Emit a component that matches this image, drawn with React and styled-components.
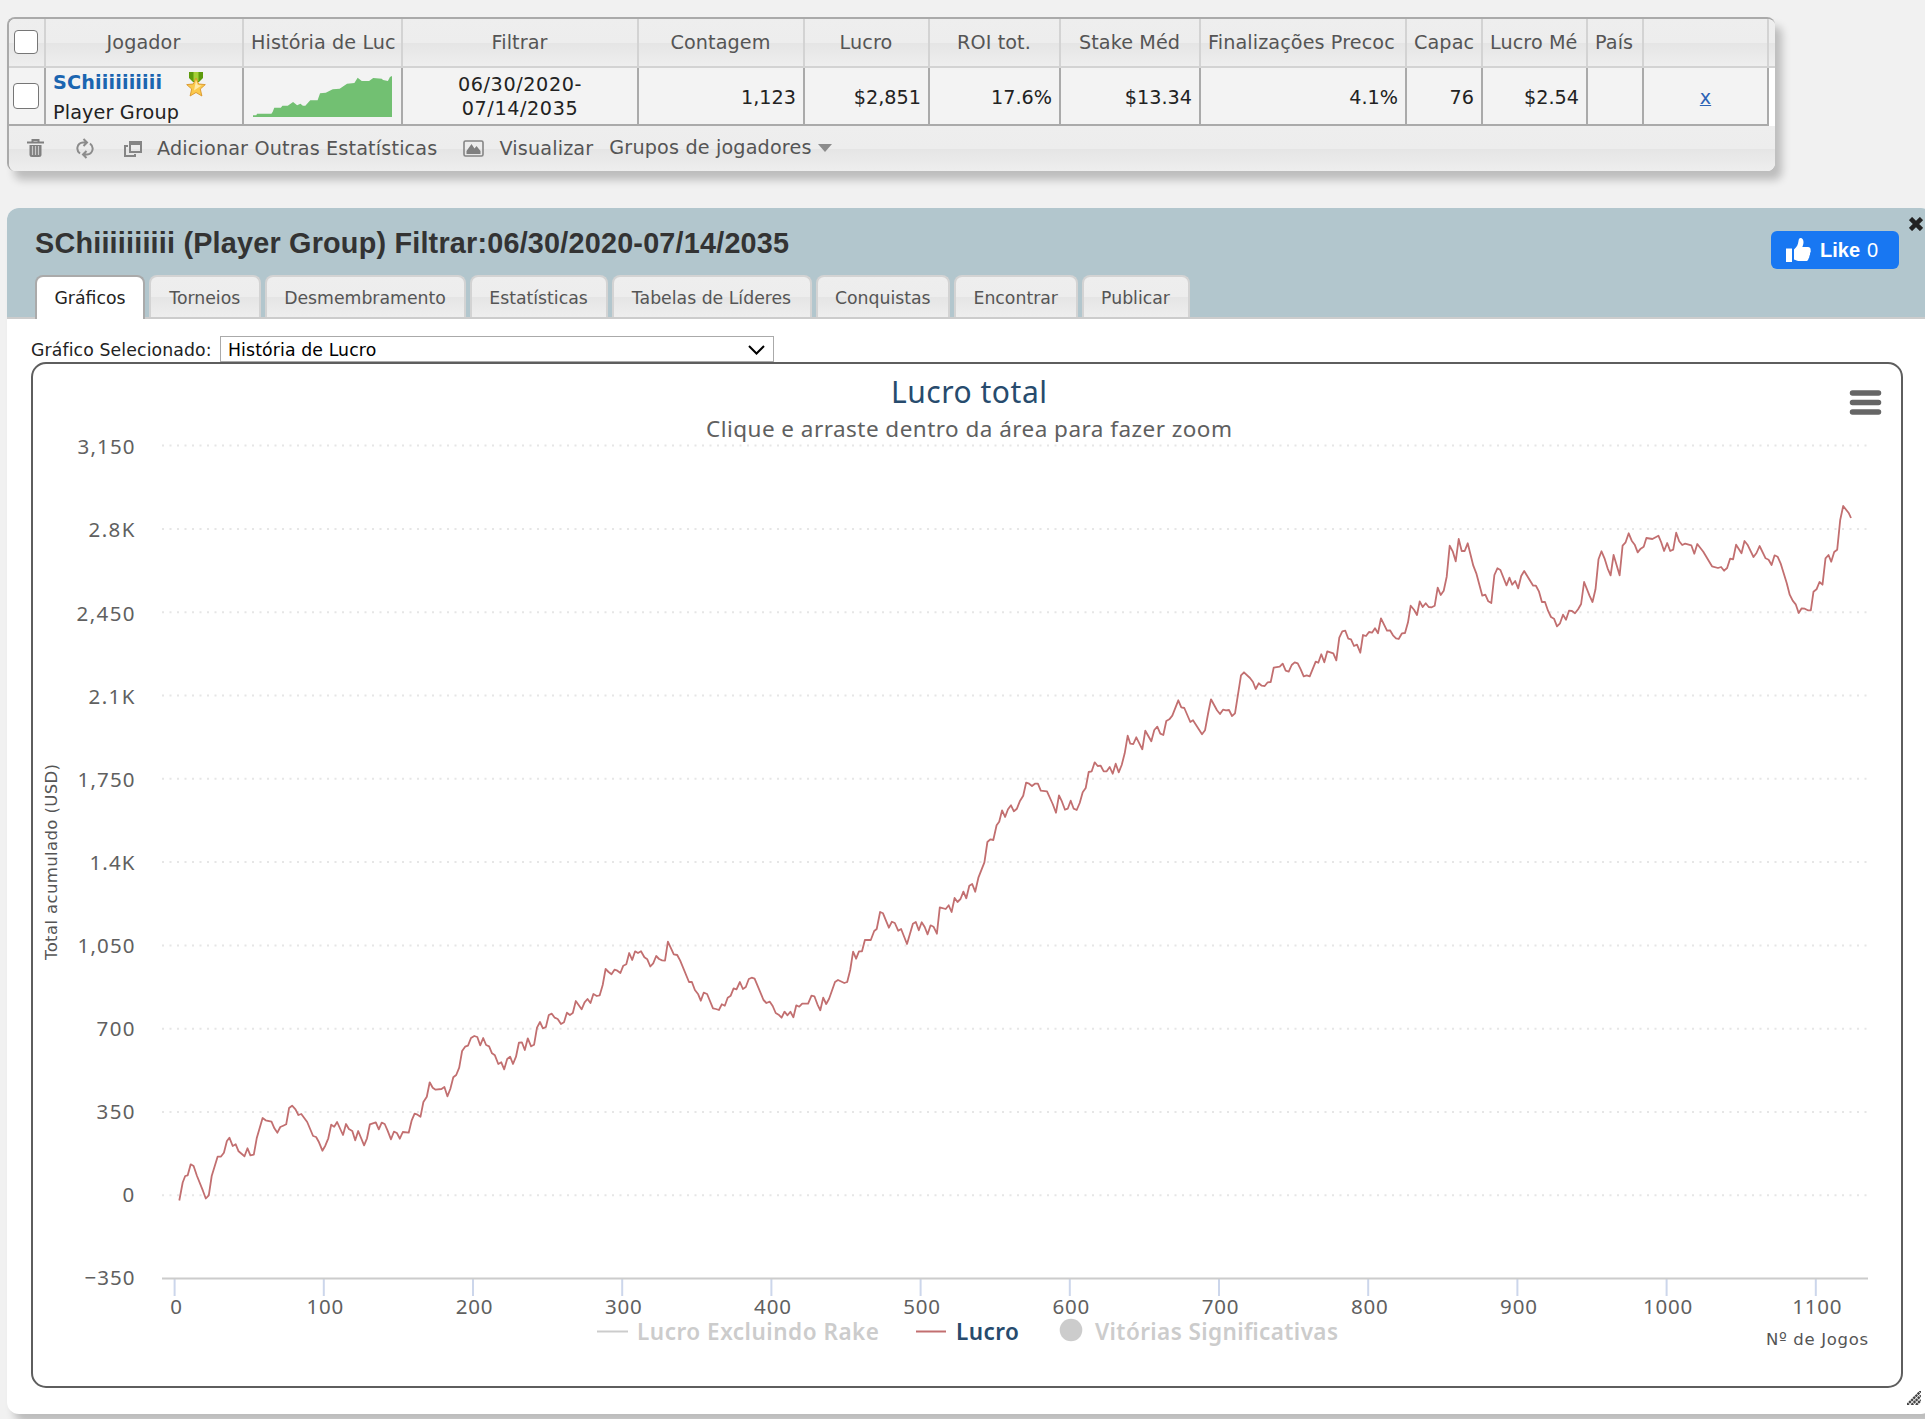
import { useState } from 'react';
import styled, { createGlobalStyle, css } from 'styled-components'

const columns = [
  { label: 'História de Luc', left: true },
  { label: 'Filtrar' },
  { label: 'Contagem' },
  { label: 'Lucro' },
  { label: 'ROI tot.' },
  { label: 'Stake Méd' },
  { label: 'Finalizações Precoc', left: true },
  { label: 'Capac', left: true },
  { label: 'Lucro Mé', left: true },
  { label: 'País', left: true },
  { label: '' },
]

const tabs = [
  { label: 'Gráficos', width: 110 },
  { label: 'Torneios', width: 111.5 },
  { label: 'Desmembramento', width: 201 },
  { label: 'Estatísticas', width: 138 },
  { label: 'Tabelas de Líderes', width: 200 },
  { label: 'Conquistas', width: 134.5 },
  { label: 'Encontrar', width: 123.5 },
  { label: 'Publicar', width: 108 },
]

const yTicks = [
  ['3,150', 57], ['2.8K', 46], ['2,450', 58], ['2.1K', 46], ['1,750', 57], ['1.4K', 45],
  ['1,050', 57], ['700', 38], ['350', 38], ['0', 12], ['−350', 50],
]

const xTicks = [0, 100, 200, 300, 400, 500, 600, 700, 800, 900, 1000, 1100]

const profit = `
179.3,1200.5 182.7,1182.5 185.2,1176 187.7,1175.3 190.7,1164.3 193.6,1166 197,1176 202.9,1190.7 205.8,1198.5 208.8,1195.3
211.7,1176 217.6,1156.7 221,1156.5 223.9,1152.7 226.9,1141 229.4,1137.7 232.7,1146 235.7,1144.3 238.6,1151.3 244.5,1156.3
247.5,1148.3 250.4,1155.3 253.8,1154.7 256.7,1138.3 262.6,1118 265.6,1120.3 271.5,1121.7 274.4,1128.3 277.4,1132.7 280.3,1127
283.2,1125.7 286.2,1124.3 289.1,1108 292.1,1105.7 295.5,1109.3 298.4,1115 301.3,1114 307.2,1122 313.1,1136 316.1,1137
319,1142.3 322.4,1150.7 325.3,1145.7 328.3,1138.3 331.2,1124.7 334.2,1126.7 337.1,1122 343,1135 346,1124 348.9,1129
352.3,1131 355.2,1140.3 358.2,1131 364.1,1145.3 367,1138.3 369.9,1124.3 375.8,1122.3 378.8,1129.3 381.7,1122.7 384.7,1124
387.6,1130.7 391,1139.3 393.9,1131.7 396.9,1133 399.8,1138.7 402.8,1132 408.7,1132.7 411.6,1120.7 414.6,1113.7 417.5,1114.7
420.5,1116.7 423.4,1102 426.8,1096.7 429.7,1082.3 432.7,1087.7 435.6,1089.7 441.5,1089 444.4,1087 447.4,1096.3 450.3,1089
453.3,1077.3 456.2,1075 459.2,1067.7 462.1,1051 465.1,1046.7 468,1045.7 471,1038 474.3,1036 477.3,1037 480.2,1045.3
483.2,1038 486.1,1045 489.1,1046.3 492,1053.3 494.9,1055.3 498.3,1064 501.3,1062.3 504.2,1069.3 507.2,1059 510.1,1056.7
513,1064 516,1056.7 518.9,1042.7 521.9,1042.3 524.8,1050 527.8,1038.3 531.1,1046.3 534.1,1044.7 537,1027.7 540,1022
542.9,1028.3 545.9,1027 548.8,1015 551.8,1013.7 554.7,1017.7 557.7,1019 561,1024 564,1022.3 566.9,1012.7 569.9,1015
572.8,1013 575.8,1001 581.6,1009.3 584.6,1002.3 587.5,999 590.5,1003 593.4,994 596.8,996 599.7,995.3 602.7,985
605.6,969 608.6,972 611.5,974.3 614.5,969.7 617.4,970.7 620.4,973 623.3,965.7 626.3,964.3 629.2,953 632.2,960
635.1,951.3 638,953 641,951.3 644.4,957.3 647.3,959.3 650.3,966.5 653.2,963.3 656.2,956 659.1,959 662.1,960.3
665,960.7 667.9,941.7 673.8,954.3 677.2,955 680.2,960.7 689,982 691.9,982 694.9,990 698.2,994.3 700.8,1000.7
703.7,992.7 707.1,994 713,1008.3 715.9,1009 718.9,1010 721.8,1004.3 724.8,1005.7 727.7,997.7 730.7,995.7 733.6,988.3
736.5,989.3 739.9,982 742.9,989 745.8,987 748.8,979 751.7,977.7 754.6,978.7 763.5,1000 766.4,1003 769.8,1001.7
772.7,1006 775.7,1013 778.6,1014.7 781.6,1017.7 784.5,1011.7 787.5,1015.3 790.4,1011.7 793.4,1017.3 796.3,1005.3 799.3,1006.7
802.2,1003.7 808.1,1003.7 811.5,995.7 814.4,996.3 817.4,1004.3 820.3,1010.3 823.2,997.7 826.2,1004 829.1,998.7 835,982
838,980 844.3,983 847.2,982 850.2,970 853.1,951.7 856.1,958.7 859,951.3 862,951.3 864.9,940 870.8,940
874.2,931 876.7,929 880.1,912 883,913.3 888.9,927.7 891.9,921.7 894.8,923 898.2,930.7 901.1,929 907,944
912.9,923.7 915.8,922 918.8,930.3 921.7,922.3 924.7,927 927.6,934.3 930.6,925.3 933.5,926.7 936.9,933.7 939.8,907.3
945.7,909 948.7,905.3 951.6,912 954.6,898 957.5,902 960.5,899 963.4,891.7 966.3,898.3 969.3,885.7 972.2,884
975.2,891.7 978.5,877.3 984.4,862.3 987.4,842 990.3,839.3 993.3,840 996.6,825.3 999.2,821.7 1002.1,810.3 1005.1,817
1008,809.3 1011,805.3 1013.9,811.3 1016.9,808.7 1019.8,801.3 1023.2,795.7 1026.1,782.7 1029.1,783.7 1032,786 1034.9,783.7
1037.9,783.7 1040.8,790.7 1047,791.3 1052.7,804 1056,812.7 1059,795.3 1062,801.7 1065,809.7 1067.7,808.7 1070.7,800.7
1073.7,808.7 1076.7,810 1079.7,803 1082.7,792.3 1085.7,788 1088.7,772 1091.7,771.3 1094.7,762.3 1097.7,766 1100.7,765.7
1103.7,771.3 1106.7,771.3 1109.7,767 1112.7,773.7 1115.7,763.7 1118.7,772.3 1121.7,765 1124.7,753.3 1127.7,735.7 1130.3,743.7
1133.3,744 1136.3,737.3 1142.3,749.3 1145.3,730.7 1151.3,741.3 1154.3,730 1157.3,726.7 1160.3,733.7 1163.3,735 1166.3,721
1169.3,719.3 1172.3,715.7 1178.3,700.3 1181.3,707.3 1184.3,708 1190.3,722 1193,720.3 1202,734.3 1205,730.3 1208,714
1211,699.3 1217,710.3 1220,714 1223,709.7 1226,710.3 1229,710 1232,716 1235,713.3 1241,675.3 1244,672.3
1250,678 1253,682 1255.7,689 1258.7,683.3 1261.7,685.7 1264.7,686 1267.7,682.3 1270.7,682 1273.7,667.7 1279.7,666.7
1282.7,663.7 1285.7,670.7 1288.7,671.7 1291.7,665 1294.7,662.3 1297.7,663.3 1300.7,669.3 1303.7,676.3 1306.7,675.3 1309.7,676.3
1315.7,661.7 1318.3,662.7 1321.3,654.3 1324.3,662.3 1327.3,651.3 1333.3,653.3 1336.3,660.3 1339.3,637.7 1342.3,631.3 1345.3,630.7
1348.3,638.7 1351,639.3 1354,646 1357,644.7 1360.3,652.7 1363,635 1366,636 1369,632 1372,632.7 1375,628.3
1378,633.3 1381,618.3 1387,630.7 1390,630.3 1393,635.3 1396,638.3 1398.7,639 1402,633.3 1405,633 1408,622.3
1410.7,605.7 1414,609.7 1417,615 1419.7,601.3 1422.7,607 1425.7,603.3 1428.7,607 1431.7,607.3 1434.7,605.7 1437.7,587.7
1440.7,595 1443.7,590.7 1446.7,576.7 1449.7,545.7 1452.7,551.3 1455.7,561.3 1458.7,539 1461.7,551 1464.7,551 1467.7,543.3
1473.3,565.7 1476.3,573.3 1482.3,595.7 1485.3,594.7 1488.3,601.3 1491.3,603 1494.4,575 1497.4,568.3 1500.4,570 1506.5,585.3
1509.5,577.7 1512.2,584.7 1515.2,581 1518.2,588.3 1521.2,576 1524.2,571 1533.2,585.7 1535.9,585.7 1538.9,591.3 1541.9,602
1545,602 1548,610.7 1551,617 1554,618.7 1557,626.3 1560,623.3 1563,614.7 1566,619.7 1569,610.7 1572,611
1575,613.3 1578.1,609.3 1581.1,604 1584.1,582 1589.5,595.7 1592.5,602 1595.5,589.3 1598.5,559.3 1601.5,551.3 1604.5,558.3
1607.6,568.3 1610.6,575.3 1613.6,555 1619.6,575.3 1622.6,545.7 1625.6,542.3 1628.7,533.3 1631.7,540.7 1634.7,544.7 1637.7,552.3
1640.7,548.7 1643.7,546.7 1646.4,538 1652.4,539 1658.4,535.7 1661.1,542 1664.1,551 1667.2,543 1670.2,551 1673.2,549.7
1676.2,532.7 1679.2,541.3 1682.2,545 1685.2,543.7 1691.3,545.3 1694.3,553.7 1697.3,544 1703.3,551.7 1712,566.3 1718,568
1721.1,567 1724.1,570.7 1727.1,568 1730.1,558.7 1733.1,559.3 1736.1,544.7 1741.5,553.3 1744.5,541 1747.5,544.7 1753.5,557
1756.5,553 1759.6,546 1765.6,558.3 1768.6,559.7 1771.6,565 1774.6,555.3 1777.6,556.7 1780.6,563.3 1786.7,583 1789.7,594.7
1792.7,600.7 1795.7,604.3 1798.7,613 1801.7,608.3 1804.8,608.7 1807.8,610.3 1810.8,610.3 1813.5,591.7 1816.5,589.3 1819.5,582
1822.5,584.7 1825.5,558.3 1828.5,555 1831.2,561.7 1834.2,552 1837.2,549.7 1840.2,520 1843.2,506 1848.9,513.3 1851,518`

const TrashIcon = () => (
  <svg width="17" height="19" viewBox="0 0 17 19" fill="none" stroke="#808080">
    <path d="M0 3.5h17M5.5 3V1h6v2" strokeWidth="2" />
    <path d="M2.5 6v9.5q0 2.5 2.5 2.5h7q2.5 0 2.5-2.5V6z" fill="#808080" stroke="none" />
    <path d="M5.5 7v9M8.5 7v9M11.5 7v9" stroke="#c9c9c9" strokeWidth="1.2" />
  </svg>
)
const RefreshIcon = () => (
  <svg width="18" height="21" viewBox="0 0 18 21" fill="none" stroke="#8c8c8c" strokeWidth="2">
    <path d="M4 15.5C-.5 12 1 5 7 4.500h3M7.500 1l3.500 3.500L7.500 8" />
    <path d="M14 5.500C18.500 9 17 16 11 16.500H8M10.500 13L7 16.500l3.500 3.500" />
  </svg>
)
const CopyIcon = () => (
  <svg width="18" height="16" viewBox="0 0 18 16" fill="none" stroke="#858585" strokeWidth="2">
    <path d="M6 1h11v10H6zM6 3h11" />
    <path d="M4 5H1v10h10v-2" />
  </svg>
)
const ImageIcon = () => (
  <svg width="21" height="17" viewBox="0 0 21 17">
    <rect x="1" y="1" width="19" height="15" rx="1.500" fill="none" stroke="#858585" strokeWidth="1.600" />
    <path d="M3.500 14v-3l5-7 3 4.500 2-2.500 4 5v3z" fill="#808080" />
  </svg>
)
const MedalIcon = () => (
  <svg width="20" height="25" viewBox="0 0 20 25">
    <path d="M3 0h14v6l-4 4H7L3 6z" fill="#5d9a0c" />
    <path d="M7.500 0h5v9h-5z" fill="#a5cf35" />
    <path d="M10 6l2.700 6 6.600.600-5 4.400 1.600 7L10 20.500 4.100 24l1.600-7-5-4.400 6.600-.600z" fill="#fbc94b" stroke="#d9952a" strokeWidth=".9" />
    <path d="M10 8.500l1.800 4.500 3.700.500-7.500 5z" fill="#ffe9a6" />
  </svg>
)
const ThumbIcon = () => (
  <svg width="25" height="24" viewBox="0 0 25 24" fill="#fff">
    <path d="M0 10.500h6V24H0z" />
    <path d="M8 11.500C11 9 12 6.500 12.500 3c.200-2 .900-3 2.100-3 1.800 0 2.900 1.700 2.900 4 0 2-.600 3.700-1.200 5H22c2 0 3 1.500 2.500 3 .400 1 .400 2-.500 3 .300 1.200 0 2.200-.700 2.900.200 1.300-.200 2.300-1 3-.100 1.500-1 2.100-2.500 2.100h-6c-2.400 0-4-.700-5.800-1.500z" />
  </svg>
)
const CloseIcon = () => (
  <svg width="14" height="14" viewBox="0 0 14 14" stroke="#222" strokeWidth="4.500">
    <path d="M1.500 1.500l11 11M12.500 1.500l-11 11" />
  </svg>
)
const Sparkline = () => (
  <svg width="139" height="41" viewBox="0 0 340 123" preserveAspectRatio="none">
    <path
      fill="#72c072"
      d="M0 123V118H8L10 113H45L48 108 52 95H68L72 89H85L98 78 108 88 116 83 122 89H128L140 73H158L164 52 178 50 195 40 212 38 230 23 248 21 256 5 266 15H284L294 6 315 8 318 12 330 15 335 3 340 0V123z"
    />
  </svg>
)

const Chart = () => (
  <ChartSvg viewBox="33 364 1868 1022">
    <ChartTitle x="891" y="403" textLength="156">Lucro total</ChartTitle>
    <ChartSubtitle x="706" y="436.500" textLength="526">Clique e arraste dentro da área para fazer zoom</ChartSubtitle>
    <g stroke="#666" strokeWidth="5.500" strokeLinecap="round">
      <path d="M1852.500 393h26M1852.500 402.500h26M1852.500 412h26" />
    </g>
    <AxisTitle x="-960" y="57" transform="rotate(-90)" textLength="196">Total acumulado (USD)</AxisTitle>
    {yTicks.map(([label, width], i) => {
      const y = 445.6 + i * 83.3
      return (
        <g key={label}>
          {i < yTicks.length - 1 && (
            <line x1="162" x2="1869" y1={y} y2={y} stroke="#e6e6e6" strokeWidth="2" strokeDasharray="2 5.5" />
          )}
          <AxisLabel x={134.5 - width} y={454.3 + i * 83.1} textLength={width}>{label}</AxisLabel>
        </g>
      )
    })}
    {xTicks.map((n, i) => {
      const x = 174.6 + i * 149.2
      return (
        <g key={n}>
          <line x1={x} x2={x} y1="1279" y2="1296" stroke="#ccd6eb" strokeWidth="2" />
          <AxisLabel x={x + 1.5} y="1313.5" textAnchor="middle" $spaced={n > 0}>{n}</AxisLabel>
        </g>
      )
    })}
    <line x1="162" x2="1868" y1="1278.500" y2="1278.500" stroke="#ccc" strokeWidth="2" />
    <AxisTitle x="1766" y="1345" textLength="102">Nº de Jogos</AxisTitle>
    <polyline points={profit} fill="none" stroke="#c26f70" strokeWidth="1.800" strokeLinejoin="round" />
    <line x1="597" x2="628" y1="1331.500" y2="1331.500" stroke="#ccc" strokeWidth="2" />
    <LegendText x="637" y="1339.500" textLength="242">Lucro Excluindo Rake</LegendText>
    <line x1="916" x2="946" y1="1331.500" y2="1331.500" stroke="#c26f70" strokeWidth="2" />
    <LegendText x="956" y="1339.500" textLength="63" $on>Lucro</LegendText>
    <circle cx="1071" cy="1330" r="11.300" fill="#ccc" />
    <LegendText x="1095" y="1339.500" textLength="243">Vitórias Significativas</LegendText>
  </ChartSvg>
)

const App = () => {
  const [active, setActive] = useState('Gráficos')
  return (
    <Page>
      <GlobalStyle />
      <StatsGrid>
        <HeadRow>
          <HeadCell $check><Check type="checkbox" $size={24} /></HeadCell>
          <HeadCell>Jogador</HeadCell>
          {columns.map((col) => (
            <HeadCell key={col.label} $left={col.left}>{col.label}</HeadCell>
          ))}
        </HeadRow>
        <BodyRow>
          <Cell $check><Check type="checkbox" $size={26} /></Cell>
          <PlayerCell>
            <PlayerLine>
              <PlayerName>SChiiiiiiiiii</PlayerName>
              <MedalIcon />
            </PlayerLine>
            <span>Player Group</span>
          </PlayerCell>
          <Cell $check><Sparkline /></Cell>
          <Cell $center>
            <FilterDates>06/30/2020-<br />07/14/2035</FilterDates>
          </Cell>
          <Cell>1,123</Cell>
          <Cell>$2,851</Cell>
          <Cell>17.6%</Cell>
          <Cell>$13.34</Cell>
          <Cell>4.1%</Cell>
          <Cell>76</Cell>
          <Cell>$2.54</Cell>
          <Cell />
          <Cell $center><RemoveLink href="#">x</RemoveLink></Cell>
        </BodyRow>
        <Toolbar>
          <ToolButton $gap={32}><TrashIcon /></ToolButton>
          <ToolButton $gap={30}><RefreshIcon /></ToolButton>
          <ToolButton $gap={26}><CopyIcon /><span>Adicionar Outras Estatísticas</span></ToolButton>
          <ToolButton $gap={16}><ImageIcon /><span>Visualizar</span></ToolButton>
          <GroupsButton>Grupos de jogadores<Caret /></GroupsButton>
        </Toolbar>
      </StatsGrid>

      <Panel>
        <PanelHeader>
          <TitleRow>
            <Title>SChiiiiiiiiii (Player Group) Filtrar:06/30/2020-07/14/2035</Title>
            <LikeButton><ThumbIcon /><b>Like</b><span>0</span></LikeButton>
            <CloseButton><CloseIcon /></CloseButton>
          </TitleRow>
          <Tabs>
            {tabs.map(({ label, width }) => (
              <Tab key={label} $width={width} $active={active === label} onClick={() => setActive(label)}>
                {label}
              </Tab>
            ))}
          </Tabs>
        </PanelHeader>
        <SelectRow>
          <SelectLabel>Gráfico Selecionado:</SelectLabel>
          <SelectBox>
            <span>História de Lucro</span>
            <svg width="17" height="10" viewBox="0 0 17 10" fill="none" stroke="#000" strokeWidth="2">
              <path d="M1 1l7.500 7.500L16 1" />
            </svg>
          </SelectBox>
        </SelectRow>
        <ChartFrame><Chart /></ChartFrame>
        <PanelFoot>
          <svg width="14" height="14" viewBox="0 0 14 14" stroke="#444" strokeWidth="2.400" strokeDasharray="2.400 .6">
            <path d="M0 14L14 0M4.500 14L14 4.500M9 14l5-5" />
          </svg>
        </PanelFoot>
      </Panel>
    </Page>
  )
}

const GlobalStyle = createGlobalStyle`
  * { box-sizing: border-box; }
  body {
    margin: 0;
    background: #f1f1f1;
    overflow: hidden;
  }
  svg { display: block; flex: none; }
`
const glossy = css`
  background: linear-gradient(180deg, #eeeeee 0%, #ededed 50%, #e5e5e5 51%, #eeeeee 100%);
`
const Page = styled.div`
  width: 1925px;
  height: 1419px;
  padding: 17px 0 0 7px;
  overflow: hidden;
  font-family: "DejaVu Sans", Verdana, sans-serif;
  font-size: 19.2px;
  color: #222;
`
const StatsGrid = styled.div`
  width: 1768px;
  height: 154px;
  border: solid #aaa;
  border-width: 2px 0 0 2px;
  border-radius: 8px;
  overflow: hidden;
  background: #fff;
  box-shadow: 7px 9px 9px rgba(0, 0, 0, 0.22);
`
const Row = styled.div`
  display: grid;
  grid-template-columns: 37px 198px 159px 236px 166px 125px 131px 140px 206px 76px 105px 56px 125px;
`
const HeadRow = styled(Row)`
  height: 49px;
  border-bottom: 2px solid #d3d3d3;
  color: #555;
  letter-spacing: 0.1px;
  ${glossy}
`
const BodyRow = styled(Row)`
  width: 1760px;
  height: 58px;
  background: #f3f3f3;
  border-bottom: 2px solid #aaa;
`
const HeadCell = styled.div`
  display: flex;
  align-items: center;
  justify-content: ${({ $left }) => ($left ? 'flex-start' : 'center')};
  padding: ${({ $check }) => ($check ? '0 1px 1px 0' : '0 8px 0 7px')};
  border-right: 2px solid #d3d3d3;
  white-space: nowrap;
  overflow: hidden;
`
const Cell = styled.div`
  display: flex;
  align-items: center;
  justify-content: ${({ $center, $check }) => ($center || $check ? 'center' : 'flex-end')};
  padding: ${({ $center, $check }) => ($check ? '0 1px 2px 0' : $center ? '0' : '0 7px 0 0')};
  border-right: 2px solid #aaa;
`
const PlayerCell = styled.div`
  display: flex;
  flex-direction: column;
  padding: 2px 0 0 7px;
  border-right: 2px solid #aaa;
  line-height: 26px;
  letter-spacing: 0.15px;
`
const PlayerLine = styled.div`
  display: flex;
  height: 30px;
  gap: 24px;
  svg { margin-top: 2px; }
`
const PlayerName = styled.b`
  color: #1b65b0;
`
const FilterDates = styled.div`
  line-height: 24px;
  text-align: center;
  letter-spacing: 0.6px;
`
const Check = styled.input`
  appearance: none;
  width: ${({ $size }) => $size}px;
  height: ${({ $size }) => $size}px;
  margin: 0;
  border: 1.5px solid #767676;
  border-radius: 4px;
  background: #fff;
`
const RemoveLink = styled.a`
  color: #2b62b5;
`
const Toolbar = styled.div`
  display: flex;
  align-items: center;
  height: 45px;
  padding: 0 0 0 18px;
  color: #555;
  letter-spacing: 0.16px;
  ${glossy}
`
const ToolButton = styled.div`
  display: flex;
  align-items: center;
  gap: 15px;
  margin-right: ${({ $gap }) => $gap}px;
`
const GroupsButton = styled.div`
  display: flex;
  align-items: center;
  gap: 6px;
  padding-bottom: 2px;
`
const Caret = styled.i`
  border: solid transparent;
  border-width: 8px 7px 0;
  border-top-color: #8c8c8c;
`
const Panel = styled.div`
  width: 1926px;
  height: 1206px;
  margin-top: 37px;
  background: #fff;
  border-radius: 12px;
  box-shadow: 7px 9px 9px rgba(0, 0, 0, 0.22);
`
const PanelHeader = styled.div`
  height: 111px;
  background: #b2c6cd;
  border-bottom: 2px solid #ccc;
  border-radius: 12px 12px 0 0;
`
const TitleRow = styled.div`
  display: flex;
  align-items: flex-start;
  height: 67px;
  padding-left: 28px;
`
const Title = styled.h1`
  flex: 1;
  margin: 18px 0 0;
  font: bold 28.8px/34px "Liberation Sans", Arial, sans-serif;
  letter-spacing: 0.2px;
  color: #333;
`
const LikeButton = styled.button`
  display: flex;
  align-items: center;
  width: 128px;
  height: 38px;
  margin: 23px 10px 0 0;
  padding: 0 0 0 15px;
  border: 0;
  border-radius: 6px;
  background: #1877f2;
  color: #fff;
  font: 20px "Liberation Sans", Arial, sans-serif;
  b { margin: 0 7px 0 9px; }
`
const CloseButton = styled.div`
  margin: 9px 10px 0 0;
`
const Tabs = styled.div`
  display: flex;
  gap: 4px;
  padding-left: 28px;
`
const Tab = styled.button`
  width: ${({ $width }) => $width}px;
  height: 42px;
  padding: 2px 0 0;
  border: 2px solid #d3d3d3;
  border-bottom: 0;
  border-radius: 8px 8px 0 0;
  font: 17.3px "DejaVu Sans", Verdana, sans-serif;
  white-space: nowrap;
  color: #555;
  ${glossy}
  ${({ $active }) => $active && css`
    height: 44px;
    padding: 0;
    border-color: #aaa;
    background: #fff;
    color: #222;
  `}
`
const SelectRow = styled.div`
  display: flex;
  align-items: flex-end;
  height: 43px;
  padding-left: 24px;
  font-size: 17.3px;
  letter-spacing: 0.12px;
`
const SelectLabel = styled.span`
  width: 189px;
  line-height: 24px;
  white-space: nowrap;
`
const SelectBox = styled.div`
  display: flex;
  align-items: center;
  justify-content: space-between;
  width: 554px;
  height: 26px;
  padding: 1px 8px 0 7px;
  border: 1px solid #aaa;
  color: #000;
`
const ChartFrame = styled.div`
  width: 1872px;
  height: 1026px;
  margin-left: 24px;
  border: 2px solid #5e5e5e;
  border-radius: 15px;
  background: #fff;
`
const ChartSvg = styled.svg`
  width: 1868px;
  height: 1022px;
`
const ChartText = styled.text`
  font-family: "Noto Sans", "Lucida Grande", sans-serif;
  fill: #606060;
`
const ChartTitle = styled(ChartText)`
  font-size: 30px;
  fill: #274b6d;
`
const ChartSubtitle = styled(ChartText)`
  font-size: 22.5px;
`
const AxisLabel = styled(ChartText)`
  font-size: 20.5px;
  letter-spacing: ${({ $spaced }) => ($spaced ? '0.8px' : '0')};
`
const AxisTitle = styled(ChartText)`
  font-family: "DejaVu Sans", Verdana, sans-serif;
  font-size: 16.5px;
  fill: #555;
`
const LegendText = styled(ChartText)`
  font-size: 22.5px;
  font-weight: 600;
  fill: ${({ $on }) => ($on ? '#274b6d' : '#ccc')};
`
const PanelFoot = styled.div`
  display: flex;
  justify-content: flex-end;
  padding: 3px 12px 0 0;
`

export default App
